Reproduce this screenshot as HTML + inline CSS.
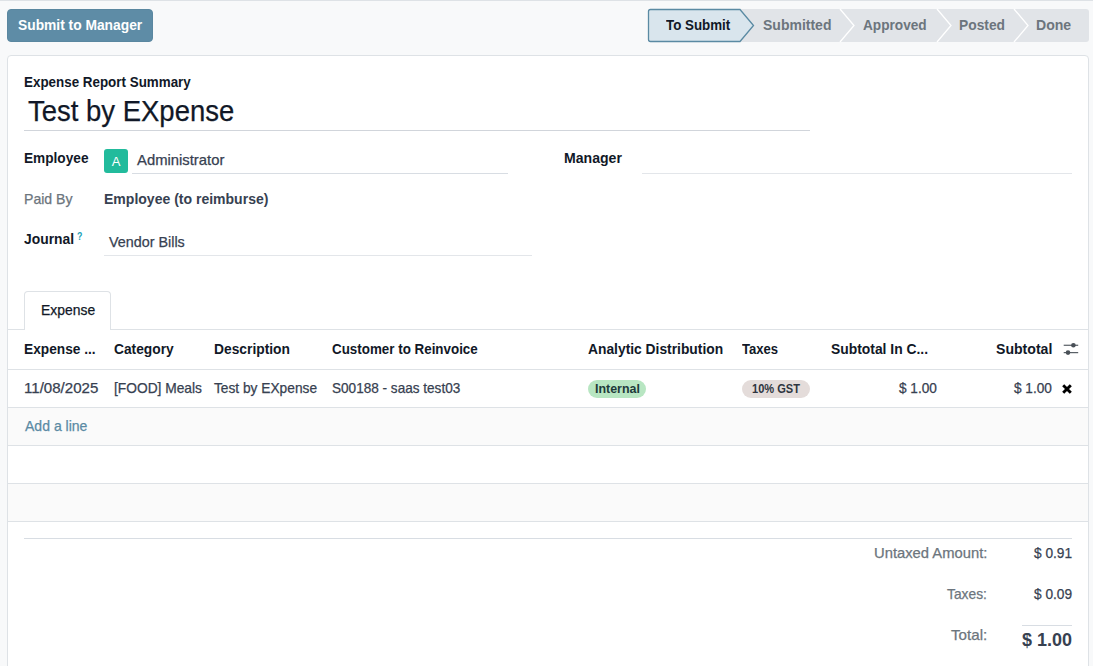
<!DOCTYPE html>
<html><head><meta charset="utf-8">
<style>
*{box-sizing:border-box;margin:0;padding:0}
html,body{width:1093px;height:666px;overflow:hidden}
body{background:#f8f9fa;font-family:"Liberation Sans",sans-serif;position:relative;color:#1f2937}
.a{position:absolute;white-space:nowrap;line-height:1;transform-origin:0 0}
.b{font-weight:bold}
.r{-webkit-text-stroke:0.25px currentColor}
.topline{position:absolute;left:0;top:0;width:1093px;height:1px;background:#dee2e6}
.btn{position:absolute;left:7px;top:9px;width:146px;height:33px;background:#5e8ca6;border-radius:4px;border:1px solid #5a87a0}
.card{position:absolute;left:7px;top:55px;width:1082px;height:640px;background:#fff;border:1px solid #dee2e6;border-radius:4px}
.hl{position:absolute;height:1px;background:#d8dde3}
.row{position:absolute;left:8px;width:1080px}
.badge{position:absolute;height:18px;border-radius:9px}
</style></head><body>
<div class="topline"></div>
<div class="btn"></div>
<svg class="a" style="left:0;top:0" width="1093" height="50" viewBox="0 0 1093 50">
  <path d="M740 9 H1086 Q1089 9 1089 12 V39 Q1089 42 1086 42 H740 Z" fill="#e1e4e8"/>
  <path d="M650.5 9.5 H740 L753.5 25.5 L740 41.5 H650.5 Q648.5 41.5 648.5 39.5 V11.5 Q648.5 9.5 650.5 9.5 Z" fill="#d9e5ed" stroke="#5a8aa3" stroke-width="1.3"/>
  <path d="M840 9 L854 25.5 L840 42" fill="none" stroke="#fff" stroke-width="1.3"/>
  <path d="M937 9 L951 25.5 L937 42" fill="none" stroke="#fff" stroke-width="1.3"/>
  <path d="M1014 9 L1028 25.5 L1014 42" fill="none" stroke="#fff" stroke-width="1.3"/>
</svg>
<div class="card"></div>
<div class="hl" style="left:24px;top:130px;width:786px;background:#d1d5db"></div>
<div class="a" style="left:104px;top:149px;width:24px;height:24px;border-radius:3px;background:#22bb9c"></div>
<div class="a" style="left:104px;top:155px;width:24px;text-align:center;font-size:13px;color:#fff">A</div>
<div class="hl" style="left:132px;top:173px;width:376px"></div>
<div class="hl" style="left:642px;top:173px;width:430px;background:#e3e6ea"></div>
<div class="hl" style="left:104px;top:255px;width:428px;background:#e3e6ea"></div>
<div class="hl" style="left:8px;top:329px;width:1080px;background:#dee2e6"></div>
<div class="a" style="left:24px;top:291px;width:87px;height:39px;background:#fff;border:1px solid #dee2e6;border-bottom:none;border-radius:4px 4px 0 0"></div>
<div class="hl" style="left:8px;top:369px;width:1080px;background:#dee2e6"></div>
<div class="row" style="top:407px;height:38px;background:#fafafa"></div>
<div class="row" style="top:483px;height:38px;background:#fafafa"></div>
<div class="hl" style="left:8px;top:407px;width:1080px;background:#dee2e6"></div>
<div class="hl" style="left:8px;top:445px;width:1080px;background:#dee2e6"></div>
<div class="hl" style="left:8px;top:483px;width:1080px;background:#dee2e6"></div>
<div class="hl" style="left:8px;top:521px;width:1080px;background:#dee2e6"></div>
<svg class="a" style="left:1063px;top:342px" width="16" height="14" viewBox="0 0 16 14">
  <rect x="0.7" y="2.7" width="14.5" height="1.1" fill="#495057"/>
  <rect x="0.7" y="10.1" width="14.5" height="1.1" fill="#495057"/>
  <circle cx="10.4" cy="3.2" r="2.3" fill="#495057"/>
  <circle cx="5" cy="10.6" r="2.3" fill="#495057"/>
</svg>
<div class="badge" style="left:588px;top:380px;width:58px;background:#b8e6c2"></div>
<div class="badge" style="left:742px;top:380px;width:68px;background:#e4dcda"></div>
<svg class="a" style="left:1060.5px;top:382.5px" width="12" height="12" viewBox="0 0 12 12">
  <path d="M2.2 2.2 L9.8 9.8 M9.8 2.2 L2.2 9.8" stroke="#000" stroke-width="2.9" stroke-linecap="butt"/>
</svg>
<div class="hl" style="left:24px;top:538px;width:1048px"></div>
<div class="hl" style="left:1022px;top:625px;width:50px"></div>
<div class="a b" style="left:17.89px;top:17.71px;font-size:14.4px;color:#ffffff;transform:scaleX(0.9587)">Submit to Manager</div>
<div class="a b" style="left:665.97px;top:17.51px;font-size:14.4px;color:#111827;transform:scaleX(0.9279)">To Submit</div>
<div class="a b" style="left:762.68px;top:17.51px;font-size:14.4px;color:#6c757d;transform:scaleX(0.9728)">Submitted</div>
<div class="a b" style="left:863.39px;top:17.51px;font-size:14.4px;color:#6c757d;transform:scaleX(0.9482)">Approved</div>
<div class="a b" style="left:958.63px;top:17.51px;font-size:14.4px;color:#6c757d;transform:scaleX(0.9592)">Posted</div>
<div class="a b" style="left:1036.31px;top:17.51px;font-size:14.4px;color:#6c757d;transform:scaleX(0.9780)">Done</div>
<div class="a b" style="left:23.56px;top:74.61px;font-size:14.4px;color:#111827;transform:scaleX(0.9308)">Expense Report Summary</div>
<div class="a r" style="left:27.95px;top:96.34px;font-size:29.6px;color:#111827;transform:scaleX(0.9286)">Test by EXpense</div>
<div class="a b" style="left:23.74px;top:150.81px;font-size:14.4px;color:#111827;transform:scaleX(0.9485)">Employee</div>
<div class="a r" style="left:136.90px;top:152.51px;font-size:14.4px;color:#374151;transform:scaleX(1.0304)">Administrator</div>
<div class="a b" style="left:563.51px;top:150.71px;font-size:14.4px;color:#111827;transform:scaleX(0.9788)">Manager</div>
<div class="a r" style="left:24.07px;top:191.51px;font-size:14.4px;color:#6c757d;transform:scaleX(0.9776)">Paid By</div>
<div class="a b" style="left:103.72px;top:191.51px;font-size:14.4px;color:#374151;transform:scaleX(0.9744)">Employee (to reimburse)</div>
<div class="a b" style="left:23.72px;top:232.21px;font-size:14.4px;color:#111827;transform:scaleX(0.9628)">Journal</div>
<div class="a b" style="left:77.16px;top:230.67px;font-size:10.9px;color:#1aa2b8;transform:scaleX(0.8073)">?</div>
<div class="a r" style="left:108.56px;top:234.61px;font-size:14.4px;color:#374151;transform:scaleX(0.9972)">Vendor Bills</div>
<div class="a r" style="left:41.19px;top:302.81px;font-size:14.4px;color:#111827;transform:scaleX(0.9671)">Expense</div>
<div class="a b" style="left:23.84px;top:341.61px;font-size:14.4px;color:#111827;transform:scaleX(0.9523)">Expense ...</div>
<div class="a b" style="left:113.55px;top:341.71px;font-size:14.4px;color:#111827;transform:scaleX(0.9567)">Category</div>
<div class="a b" style="left:213.53px;top:341.61px;font-size:14.4px;color:#111827;transform:scaleX(0.9595)">Description</div>
<div class="a b" style="left:331.76px;top:341.61px;font-size:14.4px;color:#111827;transform:scaleX(0.9300)">Customer to Reinvoice</div>
<div class="a b" style="left:587.89px;top:341.61px;font-size:14.4px;color:#111827;transform:scaleX(0.9603)">Analytic Distribution</div>
<div class="a b" style="left:742.37px;top:341.61px;font-size:14.4px;color:#111827;transform:scaleX(0.9097)">Taxes</div>
<div class="a b" style="left:831.33px;top:341.61px;font-size:14.4px;color:#111827;transform:scaleX(0.9637)">Subtotal In C...</div>
<div class="a b" style="left:995.58px;top:341.61px;font-size:14.4px;color:#111827;transform:scaleX(0.9793)">Subtotal</div>
<div class="a r" style="left:23.59px;top:381.63px;font-size:13.9px;color:#374151;transform:scaleX(1.0844)">11/08/2025</div>
<div class="a r" style="left:113.64px;top:381.63px;font-size:13.9px;color:#374151;transform:scaleX(0.9909)">[FOOD] Meals</div>
<div class="a r" style="left:214.23px;top:381.63px;font-size:13.9px;color:#374151;transform:scaleX(0.9882)">Test by EXpense</div>
<div class="a r" style="left:331.62px;top:381.63px;font-size:13.9px;color:#374151;transform:scaleX(0.9769)">S00188 - saas test03</div>
<div class="a b" style="left:594.63px;top:381.89px;font-size:13.0px;color:#1e3a3a;transform:scaleX(0.9554)">Internal</div>
<div class="a b" style="left:751.94px;top:381.89px;font-size:13.0px;color:#2f3540;transform:scaleX(0.8503)">10% GST</div>
<div class="a r" style="left:898.61px;top:381.63px;font-size:13.9px;color:#374151;transform:scaleX(0.9816)">$ 1.00</div>
<div class="a r" style="left:1013.61px;top:381.63px;font-size:13.9px;color:#374151;transform:scaleX(0.9816)">$ 1.00</div>
<div class="a r" style="left:24.50px;top:418.61px;font-size:14.4px;color:#5a8aa4;transform:scaleX(0.9754)">Add a line</div>
<div class="a r" style="left:873.72px;top:545.51px;font-size:14.4px;color:#6c757d;transform:scaleX(1.0269)">Untaxed Amount:</div>
<div class="a r" style="left:1034.26px;top:545.51px;font-size:14.4px;color:#374151;transform:scaleX(0.9523)">$ 0.91</div>
<div class="a r" style="left:947.12px;top:586.71px;font-size:14.4px;color:#6c757d;transform:scaleX(0.9592)">Taxes:</div>
<div class="a r" style="left:1034.26px;top:586.71px;font-size:14.4px;color:#374151;transform:scaleX(0.9523)">$ 0.09</div>
<div class="a r" style="left:950.90px;top:627.61px;font-size:14.4px;color:#6c757d;transform:scaleX(1.0538)">Total:</div>
<div class="a b" style="left:1022.44px;top:630.56px;font-size:18.0px;color:#374151;transform:scaleX(0.9988)">$ 1.00</div>
</body></html>
